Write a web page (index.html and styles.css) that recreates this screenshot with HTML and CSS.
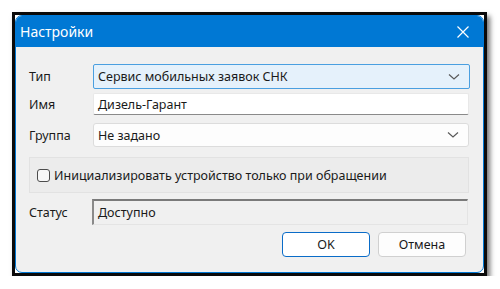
FILE: index.html
```html
<!DOCTYPE html>
<html lang="ru">
<head>
<meta charset="utf-8">
<title>Настройки</title>
<link rel="stylesheet" href="styles.css">
</head>
<body>
<div class="window">
  <div class="frame">
    <div class="titlebar">
      <span class="title">Настройки</span>
      <svg class="close" width="14" height="14" viewBox="0 0 14 14"><path d="M1.5 1.5 L12.5 12.5 M12.5 1.5 L1.5 12.5" stroke="#fff" stroke-width="1.2" fill="none"/></svg>
    </div>
    <div class="content">
      <div class="row row-type">
        <span class="label">Тип</span>
        <div class="field select focused">
          <span>Сервис мобильных заявок СНК</span>
          <svg class="chev" width="12" height="8" viewBox="0 0 12 8"><path d="M1 1.5 L6 6 L11 1.5" stroke="#5a5a5a" stroke-width="1.2" fill="none"/></svg>
        </div>
      </div>
      <div class="row row-name">
        <span class="label">Имя</span>
        <div class="field input"><span>Дизель-Гарант</span></div>
      </div>
      <div class="row row-group">
        <span class="label">Группа</span>
        <div class="field select plain">
          <span>Не задано</span>
          <svg class="chev" width="12" height="8" viewBox="0 0 12 8"><path d="M1 1.5 L6 6 L11 1.5" stroke="#5a5a5a" stroke-width="1.2" fill="none"/></svg>
        </div>
      </div>
      <div class="groupbox">
        <span class="checkbox"></span>
        <span class="cbtext">Инициализировать устройство только при обращении</span>
      </div>
      <div class="row row-status">
        <span class="label">Статус</span>
        <div class="field status"><span>Доступно</span></div>
      </div>
      <div class="buttons">
        <button class="btn primary">OK</button>
        <button class="btn">Отмена</button>
      </div>
    </div>
  </div>
</div>
</body>
</html>
```

FILE: styles.css
```css
html, body {
  margin: 0;
  padding: 0;
  background: #ffffff;
}
body {
  padding: 12px 0 0 12px;
  font-family: "Noto Sans", "Open Sans", sans-serif;
  font-size: 12.5px;
  color: #1a1a1a;
}
.window {
  width: 469px;
  height: 258px;
  border: 3px solid #0a0a0a;
  background: #ffffff;
  box-shadow: 3px 4px 5px rgba(0, 0, 0, 0.55);
}
.frame {
  box-sizing: border-box;
  width: 469px;
  height: 258px;
  background: #f0f0f0;
  border: 1px solid #0078d4;
  border-radius: 7px;
  overflow: hidden;
  display: flex;
  flex-direction: column;
}
.titlebar {
  height: 31px;
  background: #0078d4;
  display: flex;
  align-items: center;
  justify-content: space-between;
  padding: 0 13px 0 4px;
  flex-shrink: 0;
}
.title {
  color: #ffffff;
  font-size: 14px;
}
.close {
  display: block;
}
.content {
  padding: 17px 13px 0 13px;
  display: flex;
  flex-direction: column;
}
.row {
  display: flex;
  align-items: center;
}
.label {
  width: 64px;
  flex-shrink: 0;
}
.field {
  box-sizing: border-box;
  flex: 1;
  display: flex;
  align-items: center;
  justify-content: space-between;
  padding: 0 9px 0 4px;
}
.select.focused {
  height: 25px;
  border: 1px solid #4a9fe0;
  background: #e5f1fb;
  border-radius: 2px;
}
.row-name {
  margin-top: 4px;
}
.input {
  height: 22px;
  background: #ffffff;
  border: 1px solid #e8e8e8;
  border-bottom: 1px solid #8a8a8a;
  border-radius: 2px;
  margin-right: 1px;
}
.row-group {
  margin-top: 8px;
}
.select.plain {
  height: 24px;
  background: #fdfdfd;
  border: 1px solid #dcdcdc;
  border-radius: 3px;
  margin-right: 1px;
}
.groupbox {
  box-sizing: border-box;
  height: 36px;
  margin-top: 10px;
  margin-right: 1px;
  border: 1px solid #e2e2e2;
  background: #ececec;
  display: flex;
  align-items: center;
  padding-left: 7px;
  gap: 4px;
}
.checkbox {
  box-sizing: border-box;
  width: 13px;
  height: 13px;
  border: 1px solid #4d4d4d;
  border-radius: 3px;
  background: #f7f7f7;
}
.row-status {
  margin-top: 6px;
}
.status {
  height: 26px;
  border-top: 2px solid #7a7a7a;
  border-left: 2px solid #8a8a8a;
  border-right: 1px solid #e4e4e4;
  border-bottom: 1px solid #e4e4e4;
  background: #f0f0f0;
  margin-right: 2px;
  margin-left: -1px;
}
.buttons {
  display: flex;
  justify-content: flex-end;
  gap: 8px;
  margin-top: 7px;
  margin-right: 4px;
}
.btn {
  box-sizing: border-box;
  width: 88px;
  height: 25px;
  font-family: "Noto Sans", "Open Sans", sans-serif;
  font-size: 12.5px;
  color: #1a1a1a;
  background: #fdfdfd;
  border: 1px solid #d0d0d0;
  border-radius: 4px;
  padding: 0;
}
.btn.primary {
  border: 1.5px solid #0a6cc8;
  background: #ffffff;
}
```
